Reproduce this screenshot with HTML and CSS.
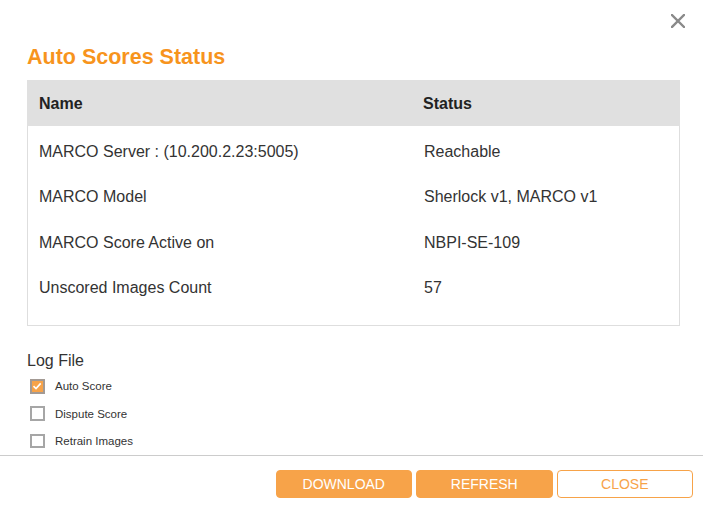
FILE: index.html
```html
<!DOCTYPE html>
<html lang="en">
<head>
<meta charset="utf-8">
<title>Auto Scores Status</title>
<link rel="stylesheet" href="styles.css">
</head>
<body>
<div class="dialog">
  <div class="content">
    <div class="topbar">
      <button class="close-x" aria-label="Close">
        <svg width="14" height="14" viewBox="0 0 14 14"><path d="M1 1 L13 13 M13 1 L1 13" stroke="#8a8a8a" stroke-width="2.4" stroke-linecap="square" fill="none"/></svg>
      </button>
    </div>
    <h1 class="title">Auto Scores Status</h1>
    <div class="table">
      <div class="thead">
        <div class="cell">Name</div>
        <div class="cell">Status</div>
      </div>
      <div class="tbody">
        <div class="row"><div class="cell">MARCO Server : (10.200.2.23:5005)</div><div class="cell">Reachable</div></div>
        <div class="row"><div class="cell">MARCO Model</div><div class="cell">Sherlock v1, MARCO v1</div></div>
        <div class="row"><div class="cell">MARCO Score Active on</div><div class="cell">NBPI-SE-109</div></div>
        <div class="row"><div class="cell">Unscored Images Count</div><div class="cell">57</div></div>
      </div>
    </div>
    <div class="log">
      <div class="log-title">Log File</div>
      <label class="check"><span class="box checked"><svg width="10" height="10" viewBox="0 0 10 10"><path d="M1.5 5.2 L4 7.6 L8.7 2.4" stroke="#fff" stroke-width="1.6" fill="none"/></svg></span><span class="lbl">Auto Score</span></label>
      <label class="check"><span class="box"></span><span class="lbl">Dispute Score</span></label>
      <label class="check"><span class="box"></span><span class="lbl">Retrain Images</span></label>
    </div>
  </div>
  <div class="footer">
    <button class="btn primary">DOWNLOAD</button>
    <button class="btn primary">REFRESH</button>
    <button class="btn outline">CLOSE</button>
  </div>
</div>
</body>
</html>
```
FILE: styles.css
```css
* { box-sizing: border-box; }
html, body { margin: 0; padding: 0; background: #fff; }
body { font-family: "Liberation Sans", Arial, sans-serif; color: #333; }
.dialog { width: 703px; height: 509px; background: #fff; }
.content { padding: 0 23px 0 27px; }
.topbar { display: flex; justify-content: flex-end; padding-top: 14px; margin-right: -5px; height: 28px; }
.close-x { width: 14px; height: 14px; padding: 0; border: 0; background: none; display: block; cursor: pointer; }
.close-x svg { display: block; }
.title { margin: 17px 0 10px; font-size: 21.5px; line-height: 25px; font-weight: bold; color: #f7941d; }
.table { border: 1px solid #dedede; border-top: 0; }
.thead { display: grid; grid-template-columns: 384px 1fr; background: #e0e0e0; height: 46px; align-items: center; margin: 0 -1px; font-weight: bold; font-size: 16px; color: #222; padding-top: 1px; }
.thead .cell { padding-left: 12px; line-height: 20px; }
.tbody { padding: 3px 0 14px; }
.row { display: grid; grid-template-columns: 384px 1fr; height: 45.5px; align-items: center; font-size: 16px; color: #333; }
.row .cell { padding-left: 11px; line-height: 20px; }
.row .cell:nth-child(2) { padding-left: 12px; }
.log { padding-top: 26px; }
.log-title { font-size: 16px; line-height: 18px; color: #333; margin-bottom: 2.6px; }
.check { display: flex; align-items: center; height: 27.4px; padding-left: 3px; cursor: pointer; }
.box { width: 14.5px; height: 14.5px; border: 2px solid #a6a6a6; background: #fff; display: flex; align-items: center; justify-content: center; }
.box.checked { background: #f7a349; border-color: #a39a94; }
.box svg { display: block; }
.lbl { margin-left: 10.5px; font-size: 11.5px; color: #333; }
.footer { border-top: 1px solid #cccccc; padding: 14px 10px 0 0; display: flex; justify-content: flex-end; gap: 4px; }
.btn { width: 136.5px; height: 28.5px; border-radius: 4px; font-family: "Liberation Sans", Arial, sans-serif; font-size: 14px; cursor: pointer; padding: 0; }
.btn.primary { background: #f7a349; border: 1px solid #f7a349; color: #fff; }
.btn.outline { background: #fff; border: 1px solid #f7a349; color: #f7a349; }
```
